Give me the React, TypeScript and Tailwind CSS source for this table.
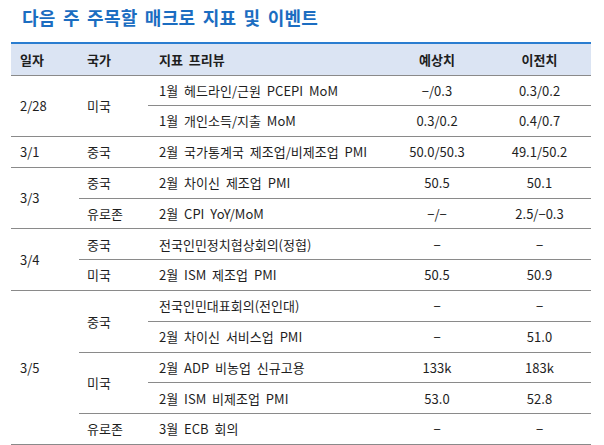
type Row = {
  date?: { label: string; span: number }
  country?: { label: string; span: number }
  name: string
  forecast: string
  prev: string
}

const ROWS: Row[] = [
  { date: { label: "2/28", span: 2 }, country: { label: "미국", span: 2 }, name: "1월 헤드라인/근원 PCEPI MoM", forecast: "−/0.3", prev: "0.3/0.2" },
  { name: "1월 개인소득/지출 MoM", forecast: "0.3/0.2", prev: "0.4/0.7" },
  { date: { label: "3/1", span: 1 }, country: { label: "중국", span: 1 }, name: "2월 국가통계국 제조업/비제조업 PMI", forecast: "50.0/50.3", prev: "49.1/50.2" },
  { date: { label: "3/3", span: 2 }, country: { label: "중국", span: 1 }, name: "2월 차이신 제조업 PMI", forecast: "50.5", prev: "50.1" },
  { country: { label: "유로존", span: 1 }, name: "2월 CPI YoY/MoM", forecast: "−/−", prev: "2.5/−0.3" },
  { date: { label: "3/4", span: 2 }, country: { label: "중국", span: 1 }, name: "전국인민정치협상회의(정협)", forecast: "−", prev: "−" },
  { country: { label: "미국", span: 1 }, name: "2월 ISM 제조업 PMI", forecast: "50.5", prev: "50.9" },
  { date: { label: "3/5", span: 5 }, country: { label: "중국", span: 2 }, name: "전국인민대표회의(전인대)", forecast: "−", prev: "−" },
  { name: "2월 차이신 서비스업 PMI", forecast: "−", prev: "51.0" },
  { country: { label: "미국", span: 2 }, name: "2월 ADP 비농업 신규고용", forecast: "133k", prev: "183k" },
  { name: "2월 ISM 비제조업 PMI", forecast: "53.0", prev: "52.8" },
  { country: { label: "유로존", span: 1 }, name: "3월 ECB 회의", forecast: "−", prev: "−" },
]

const cell = "border-b border-[#8a8a8a] align-middle"

export default function App() {
  return (
    <div className="h-[445px] w-[604px] bg-white pl-[11px] pr-[13px] pt-[5px] text-[#1e1e1e] [font-family:'Noto_Sans_CJK_KR','Noto_Sans',sans-serif]">
      <h1 className="pl-[11px] text-[18px] font-bold leading-[24px] tracking-[0.25px] text-[#1b6dc1] [word-spacing:3px]">
        다음 주 주목할 매크로 지표 및 이벤트
      </h1>

      <table className="mt-[13px] w-full table-fixed border-collapse text-[13px] [word-spacing:3px]">
        <colgroup>
          <col className="w-[68px]" />
          <col className="w-[69px]" />
          <col className="w-[238px]" />
          <col className="w-[102px]" />
          <col />
        </colgroup>
        <thead>
          <tr className="h-[32px] border-t-2 border-[#2a7dd0] bg-[#dbe4f3] font-bold">
            <th className="border-b border-[#8a8a8a] pl-[9px] text-left">일자</th>
            <th className="border-b border-[#8a8a8a] pl-[8px] text-left">국가</th>
            <th className="border-b border-[#8a8a8a] pl-[11px] text-left">지표 프리뷰</th>
            <th className="border-b border-[#8a8a8a] text-center">예상치</th>
            <th className="border-b border-[#8a8a8a] text-center">이전치</th>
          </tr>
        </thead>
        <tbody>
          {ROWS.map((r, i) => (
            <tr key={i} className="h-[30.8px]">
              {r.date && (
                <td rowSpan={r.date.span} className={`${cell} pl-[9px]`}>
                  {r.date.label}
                </td>
              )}
              {r.country && (
                <td rowSpan={r.country.span} className={`${cell} pl-[8px]`}>
                  {r.country.label}
                </td>
              )}
              <td className={`${cell} whitespace-nowrap pl-[11px]`}>{r.name}</td>
              <td className={`${cell} text-center`}>{r.forecast}</td>
              <td className={`${cell} text-center`}>{r.prev}</td>
            </tr>
          ))}
        </tbody>
      </table>
    </div>
  )
}
